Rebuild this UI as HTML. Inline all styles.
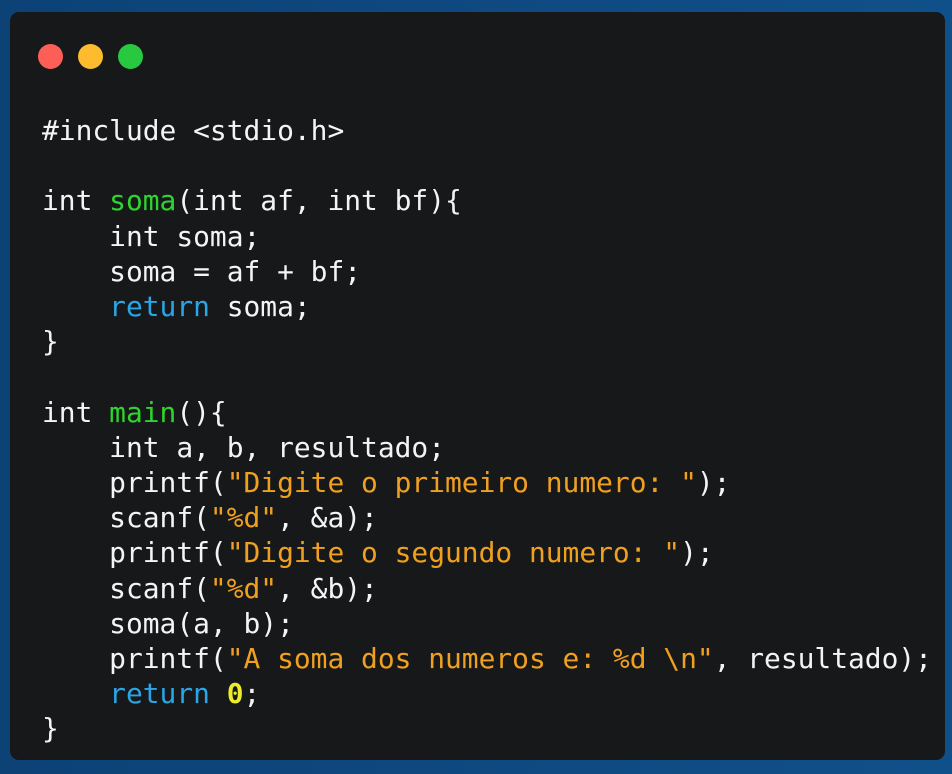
<!DOCTYPE html>
<html><head><style>
html,body{margin:0;padding:0;width:952px;height:774px;overflow:hidden;background:linear-gradient(90deg,#0c4276,#0f4a82 60%,#10508a);}
.card{position:absolute;left:10px;top:12px;width:935px;height:748px;background:#171819;border-radius:9px;}
.dot{position:absolute;top:32px;width:25px;height:25px;border-radius:50%;}
pre{position:absolute;left:32px;top:101px;margin:0;font-family:"DejaVu Sans Mono","Liberation Mono",monospace;font-size:27.9px;line-height:35.2px;color:#f4f4f4;}
.g{color:#2ed52e}.b{color:#2aa5e6}.o{color:#f0a020}.y{color:#ecec2c;font-weight:bold}
</style></head><body>
<div class="card">
<div class="dot" style="left:28px;background:#fd5f57"></div>
<div class="dot" style="left:68px;background:#fdbb2e"></div>
<div class="dot" style="left:108px;background:#28c840"></div>
<pre>#include &lt;stdio.h&gt;

int <span class="g">soma</span>(int af, int bf){
    int soma;
    soma = af + bf;
    <span class="b">return</span> soma;
}

int <span class="g">main</span>(){
    int a, b, resultado;
    printf(<span class="o">"Digite o primeiro numero: "</span>);
    scanf(<span class="o">"%d"</span>, &amp;a);
    printf(<span class="o">"Digite o segundo numero: "</span>);
    scanf(<span class="o">"%d"</span>, &amp;b);
    soma(a, b);
    printf(<span class="o">"A soma dos numeros e: %d \n"</span>, resultado);
    <span class="b">return</span> <span class="y">0</span>;
}</pre>
</div>
</body></html>
